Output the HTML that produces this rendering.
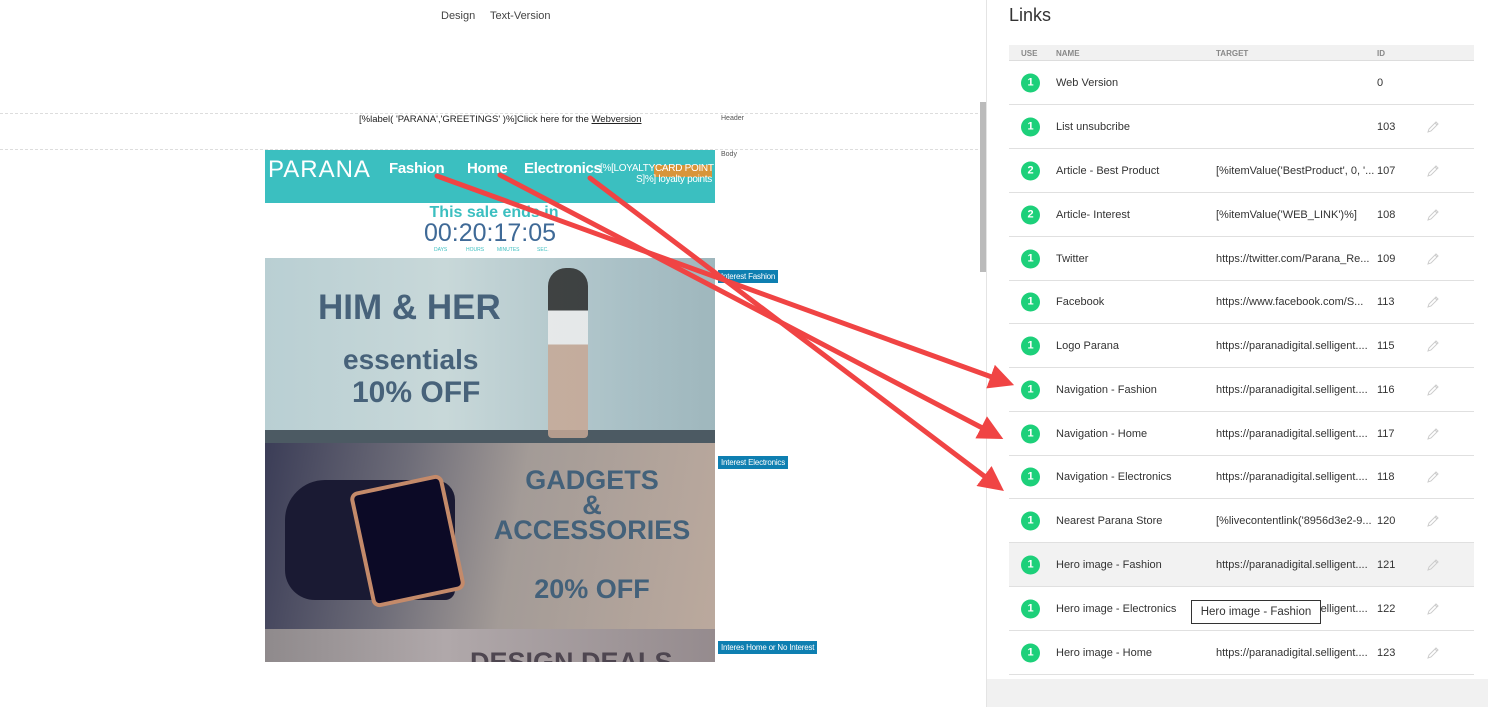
<!DOCTYPE html><html><head><style>
*{margin:0;padding:0;box-sizing:border-box}
body{width:1488px;height:707px;position:relative;overflow:hidden;background:#fff;font-family:"Liberation Sans",sans-serif;color:#333}
.a{position:absolute}
.tag{position:absolute;background:#0e7fb1;color:#fff;font-size:8px;padding:2px 3px;white-space:nowrap;letter-spacing:-0.2px}
.row{position:absolute;left:1009px;width:465px;height:44px;border-bottom:1px solid #e0e0e0;font-size:11px;color:#333}
.row span{position:absolute;top:50%;transform:translateY(-50%);white-space:nowrap}
.b{left:12px;width:19px;height:19px;border-radius:50%;background:#1dd07a;color:#fff;font-weight:bold;font-size:11px;text-align:center;line-height:19px}
.pen{left:417px;width:14px;height:14px}
.hd{position:absolute;font-size:8px;color:#888;font-weight:bold;top:49px}
.nav{position:absolute;top:160px;font-size:15px;color:#fff;font-weight:bold;letter-spacing:-0.3px}
</style></head><body>
<svg width="0" height="0" style="position:absolute"><defs><g id="p"><path d="M2,12 L3,9 L10,2 L12,4 L5,11 Z M9,3 L11,5" fill="none" stroke="#ccc" stroke-width="1"/></g></defs></svg>
<div class="a" style="left:441px;top:10px;font-size:11px;color:#444">Design</div>
<div class="a" style="left:490px;top:10px;font-size:11px;color:#444">Text-Version</div>
<div class="a" style="left:0;top:113px;width:978px;border-top:1px dashed #ddd"></div>
<div class="a" style="left:0;top:149px;width:978px;border-top:1px dashed #ddd"></div>
<div class="a" style="left:359px;top:114px;font-size:9.5px;color:#222">[%label( 'PARANA','GREETINGS' )%]Click here for the <u>Webversion</u></div>
<div class="a" style="left:721px;top:115px;font-size:7px;color:#555">Header</div>
<div class="a" style="left:721px;top:151px;font-size:7px;color:#555">Body</div>
<div class="a" style="left:980px;top:102px;width:6px;height:170px;background:#bbb"></div>
<div class="a" style="left:986px;top:0;width:1px;height:707px;background:#e4e4e4"></div>
<div class="a" style="left:265px;top:150px;width:450px;height:53px;background:#3bbfc0"></div>
<div class="a" style="left:268px;top:156px;font-size:24px;color:#fff;letter-spacing:1px">PARANA</div>
<div class="nav" style="left:389px">Fashion</div>
<div class="nav" style="left:467px">Home</div>
<div class="nav" style="left:524px">Electronics</div>
<div class="a" style="left:654px;top:165px;width:58px;height:12px;background:#d8953a"></div>
<div class="a" style="left:600px;top:163px;font-size:10px;color:#fff;text-align:right;width:112px;line-height:11px;white-space:nowrap;letter-spacing:-0.3px">[%[LOYALTYCARD POINT<br>S]%] loyalty points</div>
<div class="a" style="left:265px;top:204px;width:450px;text-align:center;font-size:16px;font-weight:bold;color:#3bbfc0;padding-left:8px">This sale ends in</div>
<div class="a" style="left:265px;top:219px;width:450px;text-align:center;font-size:25px;color:#3f6a97">00:20:17:05</div>
<div class="a" style="left:434px;top:247px;font-size:5px;color:#3bbfc0">DAYS</div>
<div class="a" style="left:466px;top:247px;font-size:5px;color:#3bbfc0">HOURS</div>
<div class="a" style="left:497px;top:247px;font-size:5px;color:#3bbfc0">MINUTES</div>
<div class="a" style="left:537px;top:247px;font-size:5px;color:#3bbfc0">SEC.</div>
<div class="a" style="left:265px;top:258px;width:450px;height:185px;background:linear-gradient(90deg,#b9cfd3,#c8d8d9 40%,#a9c0c6 80%,#9fb7bd);"></div>
<div class="a" style="left:265px;top:430px;width:450px;height:13px;background:#4c5a63"></div>
<div class="a" style="left:548px;top:268px;width:40px;height:170px;background:linear-gradient(#2a2a2a 0 25%,#eee 25% 45%,#c7a895 45%);border-radius:18px 18px 4px 4px;opacity:.85"></div>
<div class="a" style="left:318px;top:288px;font-size:35px;font-weight:bold;color:#47627a">HIM &amp; HER</div>
<div class="a" style="left:343px;top:344px;font-size:28px;font-weight:bold;color:#47627a">essentials</div>
<div class="a" style="left:352px;top:376px;font-size:30px;font-weight:bold;color:#47627a">10% OFF</div>
<div class="a" style="left:265px;top:443px;width:450px;height:186px;background:linear-gradient(100deg,#3b3d57,#6d6c78 30%,#a39b97 55%,#bba99d 100%)"></div>
<div class="a" style="left:285px;top:480px;width:170px;height:120px;background:#1a1a33;border-radius:40px 20px 10px 30px"></div>
<div class="a" style="left:360px;top:482px;width:95px;height:118px;border:4px solid #c48a6a;background:#0c0a26;border-radius:8px;transform:rotate(-12deg)"></div>
<div class="a" style="left:490px;top:468px;width:204px;text-align:center;font-size:27px;font-weight:bold;color:#43617a;line-height:25px">GADGETS<br>&amp;<br>ACCESSORIES</div>
<div class="a" style="left:490px;top:574px;width:204px;text-align:center;font-size:27px;font-weight:bold;color:#43617a">20% OFF</div>
<div class="a" style="left:265px;top:629px;width:450px;height:33px;background:linear-gradient(90deg,#8f8a8c,#b0a8aa 40%,#958b8e)"></div>
<div class="a" style="left:470px;top:652px;font-size:27px;font-weight:bold;color:#4e4650;height:10px;overflow:hidden;line-height:20px">DESIGN DEALS</div>
<div class="a" style="left:0;top:662px;width:980px;height:45px;background:#fff"></div>
<div class="tag" style="left:718px;top:270px">Interest Fashion</div>
<div class="tag" style="left:718px;top:456px">Interest Electronics</div>
<div class="tag" style="left:718px;top:641px">Interes Home or No Interest</div>
<div class="a" style="left:1009px;top:5px;font-size:18px;color:#333">Links</div>
<div class="a" style="left:1009px;top:45px;width:465px;height:16px;background:#f1f1f1;border-bottom:1px solid #ddd"></div>
<div class="hd" style="left:1021px">USE</div><div class="hd" style="left:1056px">NAME</div><div class="hd" style="left:1216px">TARGET</div><div class="hd" style="left:1377px">ID</div>
<div class="row" style="top:61px"><span class="b">1</span><span style="left:47px">Web Version</span><span style="left:368px">0</span></div>
<div class="row" style="top:105px"><span class="b">1</span><span style="left:47px">List unsubcribe</span><span style="left:368px">103</span><svg class="a pen" style="top:15px"><use href="#p"/></svg></div>
<div class="row" style="top:149px"><span class="b">2</span><span style="left:47px">Article - Best Product</span><span style="left:207px">[%itemValue('BestProduct', 0, '...</span><span style="left:368px">107</span><svg class="a pen" style="top:15px"><use href="#p"/></svg></div>
<div class="row" style="top:193px"><span class="b">2</span><span style="left:47px">Article- Interest</span><span style="left:207px">[%itemValue('WEB_LINK')%]</span><span style="left:368px">108</span><svg class="a pen" style="top:15px"><use href="#p"/></svg></div>
<div class="row" style="top:237px"><span class="b">1</span><span style="left:47px">Twitter</span><span style="left:207px">https://twitter.com/Parana_Re...</span><span style="left:368px">109</span><svg class="a pen" style="top:15px"><use href="#p"/></svg></div>
<div class="row" style="top:280px"><span class="b">1</span><span style="left:47px">Facebook</span><span style="left:207px">https://www.facebook.com/S...</span><span style="left:368px">113</span><svg class="a pen" style="top:15px"><use href="#p"/></svg></div>
<div class="row" style="top:324px"><span class="b">1</span><span style="left:47px">Logo Parana</span><span style="left:207px">https://paranadigital.selligent....</span><span style="left:368px">115</span><svg class="a pen" style="top:15px"><use href="#p"/></svg></div>
<div class="row" style="top:368px"><span class="b">1</span><span style="left:47px">Navigation - Fashion</span><span style="left:207px">https://paranadigital.selligent....</span><span style="left:368px">116</span><svg class="a pen" style="top:15px"><use href="#p"/></svg></div>
<div class="row" style="top:412px"><span class="b">1</span><span style="left:47px">Navigation - Home</span><span style="left:207px">https://paranadigital.selligent....</span><span style="left:368px">117</span><svg class="a pen" style="top:15px"><use href="#p"/></svg></div>
<div class="row" style="top:455px"><span class="b">1</span><span style="left:47px">Navigation - Electronics</span><span style="left:207px">https://paranadigital.selligent....</span><span style="left:368px">118</span><svg class="a pen" style="top:15px"><use href="#p"/></svg></div>
<div class="row" style="top:499px"><span class="b">1</span><span style="left:47px">Nearest Parana Store</span><span style="left:207px">[%livecontentlink('8956d3e2-9...</span><span style="left:368px">120</span><svg class="a pen" style="top:15px"><use href="#p"/></svg></div>
<div class="row" style="top:543px;background:#f2f2f2"><span class="b">1</span><span style="left:47px">Hero image - Fashion</span><span style="left:207px">https://paranadigital.selligent....</span><span style="left:368px">121</span><svg class="a pen" style="top:15px"><use href="#p"/></svg></div>
<div class="row" style="top:587px"><span class="b">1</span><span style="left:47px">Hero image - Electronics</span><span style="left:207px">https://paranadigital.selligent....</span><span style="left:368px">122</span><svg class="a pen" style="top:15px"><use href="#p"/></svg></div>
<div class="row" style="top:631px"><span class="b">1</span><span style="left:47px">Hero image - Home</span><span style="left:207px">https://paranadigital.selligent....</span><span style="left:368px">123</span><svg class="a pen" style="top:15px"><use href="#p"/></svg></div>
<div class="a" style="left:1191px;top:600px;width:130px;height:24px;border:1px solid #333;background:#fff;font-size:11.5px;color:#333;line-height:22px;text-align:center">Hero image - Fashion</div>
<div class="a" style="left:987px;top:679px;width:501px;height:28px;background:#f1f1f1"></div>
<svg class="a" style="left:0;top:0" width="1488" height="707">
<defs><marker id="m" markerWidth="5" markerHeight="5" refX="2" refY="2.5" orient="auto" markerUnits="strokeWidth"><path d="M0,0 L5,2.5 L0,5z" fill="#f04444"/></marker></defs>
<g stroke="#f04444" stroke-width="5" stroke-linecap="round" fill="none">
<line x1="437" y1="176" x2="1000" y2="380" marker-end="url(#m)"/>
<line x1="500" y1="175" x2="990" y2="432" marker-end="url(#m)"/>
<line x1="590" y1="178" x2="992" y2="482" marker-end="url(#m)"/>
</g></svg>
</body></html>
